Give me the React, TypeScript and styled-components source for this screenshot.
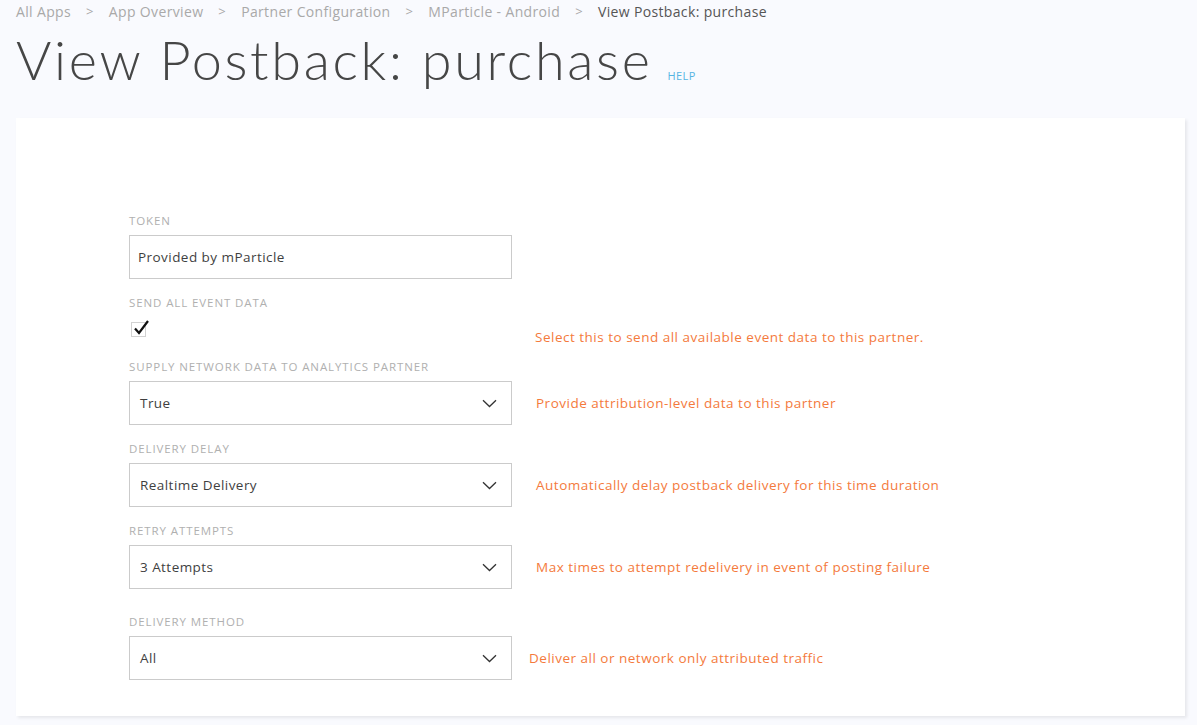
import styled, { createGlobalStyle } from 'styled-components';

const Global = createGlobalStyle`
  html, body {
    margin: 0;
    padding: 0;
    background: #f9fafe;
  }
  body {
    font-family: "Open Sans", "Liberation Sans", sans-serif;
    color: #444;
  }
`

const Page = styled.div`
  padding: 0 12px 9px 16px;
  min-height: 100vh;
  box-sizing: border-box;
`

const Crumbs = styled.nav`
  display: flex;
  align-items: center;
  gap: 15px;
  height: 22px;
  font-size: 14px;
  letter-spacing: 0.35px;
  color: #a9a9a9;
`

const Crumb = styled.span<{ $current?: boolean }>`
  color: ${p => (p.$current ? '#555' : '#a9a9a9')};
`

const Sep = styled.span`
  color: #a9a9a9;
  font-size: 13px;
`

const TitleRow = styled.div`
  display: flex;
  align-items: baseline;
  gap: 15px;
  height: 96px;
`

const Title = styled.h1`
  margin: 0;
  font-family: "Lato", "Open Sans", sans-serif;
  font-weight: 300;
  font-size: 54px;
  line-height: 76px;
  color: #464646;
  letter-spacing: 2.65px;
`

const Help = styled.a`
  font-size: 11px;
  color: #56b4e2;
  text-decoration: none;
  letter-spacing: 0.4px;
`

const Card = styled.section`
  background: #fff;
  box-shadow: 2px 2px 3px rgba(0, 0, 0, 0.08);
  padding: 96px 0 36px 113px;
`

const Block = styled.div<{ $after?: number }>`
  display: flex;
  flex-direction: column;
  margin-bottom: ${p => p.$after ?? 17}px;
`

const Label = styled.label`
  font-size: 11.5px;
  line-height: 14px;
  color: #b0b0b0;
  text-transform: uppercase;
  letter-spacing: 0.9px;
  margin-bottom: 7px;
`

const Row = styled.div<{ $gap?: number }>`
  display: flex;
  align-items: center;
  gap: ${p => p.$gap ?? 24}px;
`

const Box = styled.div`
  width: 383px;
  height: 44px;
  box-sizing: border-box;
  border: 1px solid #cbcbcb;
  display: flex;
  align-items: center;
  justify-content: space-between;
  padding: 0 14px 0 8px;
  font-size: 13.5px;
  letter-spacing: 0.45px;
  color: #3f3f3f;
`

const SelectBox = styled(Box)`
  padding-left: 10px;
`

const Hint = styled.span`
  font-size: 13.5px;
  letter-spacing: 0.5px;
  color: #f47a3c;
`

const CheckRow = styled.div`
  display: flex;
  height: 43px;
  gap: 389px;
`

const Check = styled.span`
  width: 15px;
  height: 15px;
  margin: 5px 0 0 2px;
  border: 1px solid #d2d2d2;
  box-sizing: border-box;
  position: relative;
`

const Tick = styled.svg`
  position: absolute;
  left: 1px;
  top: -4px;
`

const CheckHint = styled(Hint)`
  align-self: flex-end;
  margin-bottom: 14px;
`

const Chevron = () => (
  <svg width="15" height="9" viewBox="0 0 15 9" fill="none">
    <path d="M1 1.2L7.5 7.5L14 1.2" stroke="#333" strokeWidth="1.3" />
  </svg>
)

const selects = [
  { label: 'Supply Network Data to Analytics Partner', value: 'True', hint: 'Provide attribution-level data to this partner', after: 17 },
  { label: 'Delivery Delay', value: 'Realtime Delivery', hint: 'Automatically delay postback delivery for this time duration', after: 17 },
  { label: 'Retry Attempts', value: '3 Attempts', hint: 'Max times to attempt redelivery in event of posting failure', after: 26 },
  { label: 'Delivery Method', value: 'All', hint: 'Deliver all or network only attributed traffic', after: 0, gap: 17 },
]

export default function App() {
  const trail = ['All Apps', 'App Overview', 'Partner Configuration', 'MParticle - Android']
  return (
    <Page>
      <Global />
      <Crumbs>
        {trail.map(t => (
          <>
            <Crumb key={t}>{t}</Crumb>
            <Sep>&gt;</Sep>
          </>
        ))}
        <Crumb $current>View Postback: purchase</Crumb>
      </Crumbs>
      <TitleRow>
        <Title>View Postback: purchase</Title>
        <Help href="#">HELP</Help>
      </TitleRow>
      <Card>
        <Block>
          <Label>Token</Label>
          <Box>Provided by mParticle</Box>
        </Block>
        <Block $after={0}>
          <Label>Send All Event Data</Label>
          <CheckRow>
            <Check>
              <Tick width="18" height="18" viewBox="0 0 18 18">
                <path d="M2 9.5L6 14L15 2" stroke="#111" strokeWidth="2.2" fill="none" />
              </Tick>
            </Check>
            <CheckHint>Select this to send all available event data to this partner.</CheckHint>
          </CheckRow>
        </Block>
        {selects.map(s => (
          <Block key={s.label} $after={s.after}>
            <Label>{s.label}</Label>
            <Row $gap={s.gap}>
              <SelectBox>
                <span>{s.value}</span>
                <Chevron />
              </SelectBox>
              <Hint>{s.hint}</Hint>
            </Row>
          </Block>
        ))}
      </Card>
    </Page>
  )
}
